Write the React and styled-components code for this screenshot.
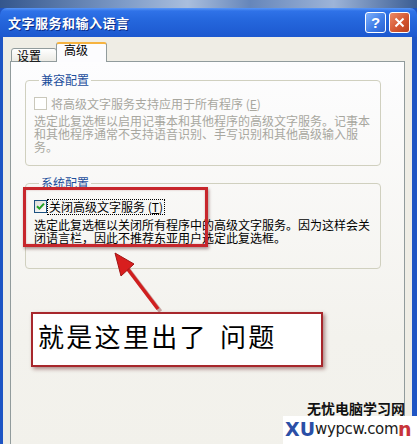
import styled, { createGlobalStyle } from "styled-components";

const GlobalStyle = createGlobalStyle`
  html, body {
    margin: 0;
    padding: 0;
    background: #3a5f96;
  }
  body {
    font-family: "Noto Sans CJK SC", "Liberation Sans", sans-serif;
  }
`;

const cjk = `"Noto Sans CJK SC", "Liberation Sans", sans-serif`;

const Window = styled.div`
  position: relative;
  width: 417px;
  height: 444px;
  overflow: hidden;
  display: flex;
  flex-direction: column;
  background: #1f55c4;
`;

const Desktop = styled.div`
  height: 8px;
  background: linear-gradient(90deg, #34568c 0%, #7f9cc8 30%, #a9bedd 45%, #6686ba 60%, #9db4d8 80%, #3b5d93 100%);
`;

const TitleBar = styled.div`
  height: 29px;
  display: flex;
  align-items: center;
  padding: 0 7px 0 8px;
  border-radius: 7px 7px 0 0;
  background: linear-gradient(#5a97f7 0px, #2f72e8 3px, #2466dc 45%, #1c58cf 100%);
`;

const Title = styled.div`
  flex: 1;
  color: #fff;
  font-family: ${cjk};
  font-size: 13px;
  font-weight: 700;
  letter-spacing: 0.5px;
  text-shadow: 1px 1px 0 #0b2c86;
`;

const CaptionButton = styled.div`
  width: 19px;
  height: 19px;
  margin-left: 3px;
  border: 1px solid #fff;
  border-radius: 3px;
  display: flex;
  align-items: center;
  justify-content: center;
  color: #fff;
  font-family: "Liberation Sans", sans-serif;
  font-size: 15px;
  font-weight: 700;
  background: ${(p) =>
    p.kind === "close"
      ? "linear-gradient(135deg, #ee8a66, #d2542e 60%, #b8401f)"
      : "linear-gradient(135deg, #7fb0fb, #3c7ae6 60%, #2a62d2)"};
`;

const Frame = styled.div`
  flex: 1;
  display: flex;
  padding: 0 5px 0 3px;
  min-height: 0;
`;

const Body = styled.div`
  flex: 1;
  display: flex;
  flex-direction: column;
  background: #efede5;
  padding: 6px 7px 0 7px;
`;

const TabRow = styled.div`
  display: flex;
  align-items: flex-end;
  height: 19px;
  padding-left: 1px;
  position: relative;
  z-index: 1;
  margin-bottom: -1px;
`;

const Tab = styled.div`
  box-sizing: border-box;
  height: ${(p) => (p.active ? "20px" : "14px")};
  width: ${(p) => (p.active ? "51px" : "46px")};
  border: 1px solid #919b9c;
  border-bottom: ${(p) => (p.active ? "none" : "1px solid #919b9c")};
  border-top: ${(p) => (p.active ? "2px solid #f6b340" : "1px solid #919b9c")};
  border-radius: 3px 3px 0 0;
  background: ${(p) => (p.active ? "#fcfcfe" : "linear-gradient(#ffffff, #ecebe5)")};
  font-family: ${cjk};
  font-size: 12px;
  color: #000;
  line-height: ${(p) => (p.active ? "12px" : "14px")};
  padding-left: ${(p) => (p.active ? "7px" : "5px")};
  margin-left: ${(p) => (p.active ? "-1px" : "0")};
`;

const Panel = styled.div`
  flex: 1;
  border: 1px solid #919b9c;
  margin-bottom: -12px;
  background: linear-gradient(#fdfdfe, #f3f2ed 70%, #f2f1eb);
  padding: 11px 0 0 14px;
`;

const Group = styled.fieldset`
  box-sizing: border-box;
  width: 356px;
  margin: ${(p) => (p.first ? "0" : "10px 0 0 0")};
  padding: 10px 0 ${(p) => p.pb}px 8px;
  border: 1px solid #d0d0bf;
  border-radius: 4px;
  min-width: 0;
`;

const Legend = styled.legend`
  margin-left: 5px;
  padding: 0 2px;
  font-family: ${cjk};
  font-size: 12px;
  line-height: 14px;
  color: #1d4f9c;
`;

const CheckRow = styled.div`
  display: flex;
  align-items: center;
  height: 13px;
`;

const Box = styled.div`
  box-sizing: border-box;
  width: 13px;
  height: 13px;
  border: 1px solid ${(p) => (p.disabled ? "#cac8bb" : "#1c5180")};
  background: ${(p) => (p.disabled ? "#fff" : "linear-gradient(135deg, #dcdcd7, #fff)")};
  display: flex;
  align-items: center;
  justify-content: center;
`;

const CheckLabel = styled.span`
  margin-left: ${(p) => (p.focused ? "1px" : "3px")};
  padding: 0 1px;
  font-family: ${cjk};
  font-size: 12px;
  line-height: 14px;
  color: ${(p) => (p.disabled ? "#a8a79f" : "#000")};
  outline: ${(p) => (p.focused ? "1px dotted #000" : "none")};
`;

const Desc = styled.div`
  width: 340px;
  margin-top: ${(p) => p.mt}px;
  font-family: ${cjk};
  font-size: 12px;
  line-height: 13px;
  color: ${(p) => (p.disabled ? "#a8a79f" : "#000")};
`;

const Highlight = styled.div`
  position: absolute;
  left: 23px;
  top: 187px;
  width: 185px;
  height: 60px;
  box-sizing: border-box;
  border: 3px solid #c7262c;
  box-shadow: 1px 2px 3px rgba(60, 0, 0, 0.4), inset 0 0 2px rgba(120, 0, 0, 0.3);
  pointer-events: none;
`;

const Overlay = styled.svg`
  position: absolute;
  left: 0;
  top: 0;
  pointer-events: none;
`;

const Callout = styled.div`
  position: absolute;
  left: 31px;
  top: 312px;
  width: 292px;
  height: 55px;
  box-sizing: border-box;
  border: 2px solid #a7272c;
  background: #fff;
  box-shadow: 2px 2px 4px rgba(80, 0, 0, 0.45);
  display: flex;
  align-items: center;
  padding: 0 0 8px 5px;
  font-family: ${cjk};
  font-size: 26px;
  letter-spacing: 2.3px;
  word-spacing: 4px;
  color: #000;
`;

const Watermark = styled.div`
  position: absolute;
  right: 0;
  bottom: 0;
  width: 134px;
  display: flex;
  flex-direction: column;
  align-items: flex-end;
`;

const SiteName = styled.div`
  padding-right: 12px;
  font-family: ${cjk};
  font-size: 14px;
  font-weight: 700;
  line-height: 15px;
  color: #111;
`;

const Logo = styled.div`
  align-self: stretch;
  height: 26px;
  background: #fff;
  display: flex;
  align-items: center;
  padding: 0 0 2px 2px;
  font-family: "DejaVu Sans", "Liberation Sans", sans-serif;
  line-height: 16px;
`;

const LogoPart = styled.span`
  color: ${(p) => p.color};
  font-size: ${(p) => p.size}px;
  font-weight: ${(p) => (p.bold ? 700 : 400)};
  letter-spacing: ${(p) => (p.bold ? "0" : "-0.4px")};
`;

function CheckMark() {
  return (
    <svg width="9" height="9" viewBox="0 0 9 9">
      <path d="M1 4.2 L3.4 6.6 L8 1.6" stroke="#21a121" strokeWidth="2" fill="none" />
    </svg>
  );
}

export default function App() {
  return (
    <>
      <GlobalStyle />
      <Window>
        <Desktop />
        <TitleBar>
          <Title>文字服务和输入语言</Title>
          <CaptionButton>?</CaptionButton>
          <CaptionButton kind="close">
            <svg width="11" height="11" viewBox="0 0 11 11">
              <path d="M1.5 1.5 L9.5 9.5 M9.5 1.5 L1.5 9.5" stroke="#fff" strokeWidth="2" />
            </svg>
          </CaptionButton>
        </TitleBar>
        <Frame>
          <Body>
            <TabRow>
              <Tab>设置</Tab>
              <Tab active>高级</Tab>
            </TabRow>
            <Panel>
              <Group first pb={12}>
                <Legend>兼容配置</Legend>
                <CheckRow>
                  <Box disabled />
                  <CheckLabel disabled>
                    将高级文字服务支持应用于所有程序 (<u>E</u>)
                  </CheckLabel>
                </CheckRow>
                <Desc disabled mt={4}>
                  选定此复选框以启用记事本和其他程序的高级文字服务。记事本和其他程序通常不支持语音识别、手写识别和其他高级输入服务。
                </Desc>
              </Group>
              <Group pb={24}>
                <Legend>系统配置</Legend>
                <CheckRow>
                  <Box>
                    <CheckMark />
                  </Box>
                  <CheckLabel focused>
                    关闭高级文字服务 (<u>T</u>)
                  </CheckLabel>
                </CheckRow>
                <Desc mt={5}>
                  选定此复选框以关闭所有程序中的高级文字服务。因为这样会关闭语言栏，因此不推荐东亚用户选定此复选框。
                </Desc>
              </Group>
            </Panel>
          </Body>
        </Frame>

        <Highlight />
        <Overlay width="417" height="444" viewBox="0 0 417 444">
          <line x1="159" y1="310" x2="127" y2="268" stroke="#7a1010" strokeWidth="4" opacity="0.35" transform="translate(1.5,1.5)" />
          <line x1="158" y1="309" x2="127" y2="268" stroke="#d01f1f" strokeWidth="3.5" />
          <polygon points="115,253 134,264 121,276" fill="#d81e1e" stroke="#a01515" strokeWidth="1" />
        </Overlay>
        <Callout>就是这里出了 问题</Callout>

        <Watermark>
          <SiteName>无忧电脑学习网</SiteName>
          <Logo>
            <LogoPart color="#2b4fa6" size={19} bold>XU</LogoPart>
            <LogoPart color="#1a1a1a" size={15}>wypcw.com</LogoPart>
            <LogoPart color="#c8343a" size={19} bold>n</LogoPart>
          </Logo>
        </Watermark>
      </Window>
    </>
  );
}
